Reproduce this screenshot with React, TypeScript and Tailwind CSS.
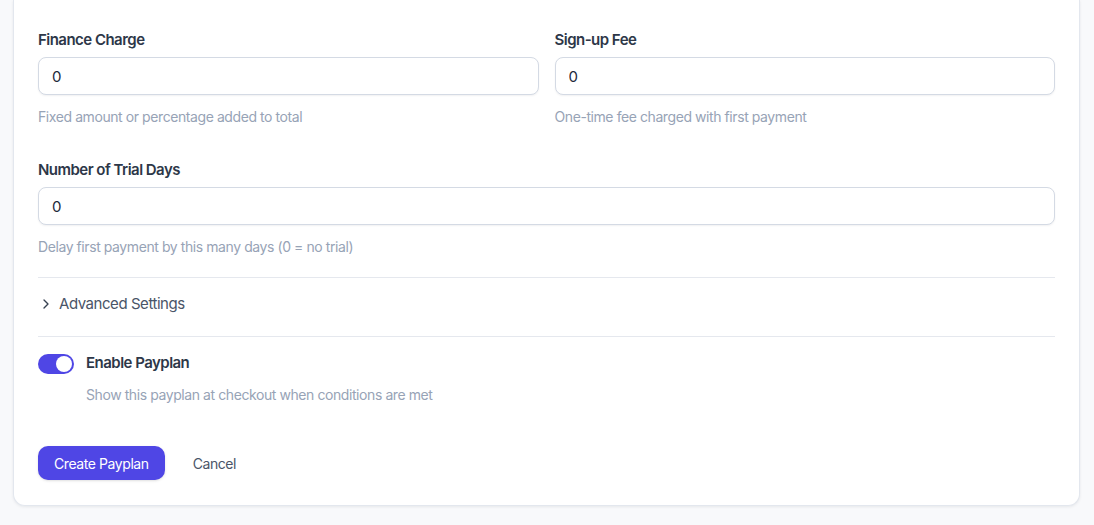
import React, { useState } from 'react';
import { ChevronRight } from 'lucide-react';

const font = { fontFamily: 'Inter, "Noto Sans", sans-serif' };

interface FieldProps {
  label: string;
  value: string;
  help: string;
}

const Field: React.FC<FieldProps> = ({ label, value, help }) => {
  return (
    <div>
      <label className="block text-[15px] leading-[22px] font-semibold text-[#2d3748] mb-[6px] tracking-[-0.035em]">
        {label}
      </label>
      <input
        readOnly
        value={value}
        className="w-full h-[38px] px-[13px] rounded-lg border border-[#d4dae4] bg-white shadow-[0_1px_2px_rgba(15,23,42,0.06)] text-[15px] text-[#1e293b] outline-none"
      />
      <p className="mt-3 text-[14px] leading-5 text-[#97a3b6] tracking-[-0.03em]">{help}</p>
    </div>
  );
};

const App = () => {
  const [enabled, setEnabled] = useState(true);

  return (
    <div className="min-h-[525px] bg-[#f8f9fb] pl-[13px] pr-[14px] pb-[20px]" style={font}>
      <div className="bg-white border-x border-b border-[#e3e7ee] rounded-b-xl shadow-[0_1px_3px_rgba(15,23,42,0.08)] px-6 pt-[29px] pb-[25px]">
        <div className="grid grid-cols-2 gap-x-4">
          <Field label="Finance Charge" value="0" help="Fixed amount or percentage added to total" />
          <Field label="Sign-up Fee" value="0" help="One-time fee charged with first payment" />
        </div>

        <div className="mt-8">
          <Field label="Number of Trial Days" value="0" help="Delay first payment by this many days (0 = no trial)" />
        </div>

        <div className="mt-5 border-t border-[#e5e8ee] pt-[15px] pb-[21px]">
          <button className="flex items-center gap-[5px] text-[15px] leading-[22px] text-[#4a5568] tracking-[-0.03em]">
            <ChevronRight size={16} strokeWidth={2} className="text-[#374151]" />
            Advanced Settings
          </button>
        </div>

        <div className="border-t border-[#e5e8ee] pt-[17px]">
          <div className="flex items-start gap-3">
            <button
              onClick={() => setEnabled(!enabled)}
              className={`relative shrink-0 w-9 h-5 rounded-full ${enabled ? 'bg-[#4f46e5]' : 'bg-[#cbd5e1]'}`}
            >
              <span
                className={`absolute top-[2px] w-4 h-4 rounded-full bg-white ${enabled ? 'left-[18px]' : 'left-[2px]'}`}
              />
            </button>
            <div>
              <div className="text-[15px] leading-[18px] font-semibold text-[#2d3748] tracking-[-0.035em]">Enable Payplan</div>
              <p className="mt-[13px] text-[14px] leading-5 text-[#97a3b6] tracking-[-0.03em]">
                Show this payplan at checkout when conditions are met
              </p>
            </div>
          </div>
        </div>

        <div className="mt-[41px] flex items-center gap-7">
          <button className="h-[34px] px-4 rounded-[10px] bg-[#4f46e5] text-white text-[14px] tracking-[-0.03em] shadow-sm">
            Create Payplan
          </button>
          <button className="text-[14px] text-[#4a5568] tracking-[-0.03em]">Cancel</button>
        </div>
      </div>
    </div>
  );
};

export default App;
